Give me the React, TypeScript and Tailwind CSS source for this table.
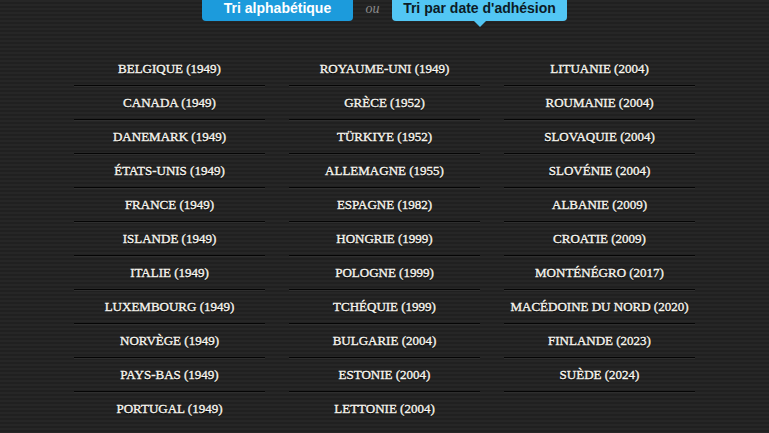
const col1 = [
  "BELGIQUE (1949)",
  "CANADA (1949)",
  "DANEMARK (1949)",
  "ÉTATS-UNIS (1949)",
  "FRANCE (1949)",
  "ISLANDE (1949)",
  "ITALIE (1949)",
  "LUXEMBOURG (1949)",
  "NORVÈGE (1949)",
  "PAYS-BAS (1949)",
  "PORTUGAL (1949)",
];

const col2 = [
  "ROYAUME-UNI (1949)",
  "GRÈCE (1952)",
  "TÜRKIYE (1952)",
  "ALLEMAGNE (1955)",
  "ESPAGNE (1982)",
  "HONGRIE (1999)",
  "POLOGNE (1999)",
  "TCHÉQUIE (1999)",
  "BULGARIE (2004)",
  "ESTONIE (2004)",
  "LETTONIE (2004)",
];

const col3 = [
  "LITUANIE (2004)",
  "ROUMANIE (2004)",
  "SLOVAQUIE (2004)",
  "SLOVÉNIE (2004)",
  "ALBANIE (2009)",
  "CROATIE (2009)",
  "MONTÉNÉGRO (2017)",
  "MACÉDOINE DU NORD (2020)",
  "FINLANDE (2023)",
  "SUÈDE (2024)",
];

function Column({ items, lastBorder }: { items: string[]; lastBorder: boolean }) {
  return (
    <ul className="flex flex-col">
      {items.map((name, i) => {
        const border = lastBorder || i < items.length - 1;
        return (
          <li
            key={name}
            className={`h-[34px] flex items-center justify-center text-[13px] text-[#f7f5ee] [-webkit-text-stroke:0.35px_#f7f5ee] [text-shadow:0_1px_1px_#000] ${
              border ? "border-b border-[#050505] shadow-[0_1px_0_#2e2e2e]" : ""
            }`}
          >
            {name}
          </li>
        );
      })}
    </ul>
  );
}

export default function App() {
  return (
    <div
      className="w-[769px] h-[433px] overflow-hidden bg-[repeating-linear-gradient(180deg,#262626_0px,#262626_2px,#202020_2px,#202020_4px)]"
      style={{ fontFamily: '"Liberation Serif", "Times New Roman", serif' }}
    >
      <div
        className="flex items-start justify-center -mt-[9px]"
        style={{ fontFamily: '"Liberation Sans", Arial, sans-serif' }}
      >
        <button className="w-[151px] h-[30px] rounded-[4px] bg-[#1c9bdc] text-white text-[14px] font-bold leading-none pt-[3px]">
          Tri alphabétique
        </button>
        <span className="w-[39px] h-[30px] flex items-center justify-center text-[#8a8a8a] italic text-[14px] pt-[4px] font-['Liberation_Serif',serif]">
          ou
        </span>
        <button className="relative w-[175px] h-[30px] rounded-[4px] bg-[#52c6f4] text-[#0c1b26] text-[14px] font-bold leading-none pt-[3px]">
          Tri par date d'adhésion
          <span className="absolute left-1/2 -translate-x-1/2 top-full w-0 h-0 border-l-[6px] border-r-[6px] border-t-[6px] border-l-transparent border-r-transparent border-t-[#52c6f4]" />
        </button>
      </div>

      <div className="w-[621px] mx-auto mt-[31px] grid grid-cols-3 gap-x-6">
        <Column items={col1} lastBorder={false} />
        <Column items={col2} lastBorder={false} />
        <Column items={col3} lastBorder={true} />
      </div>
    </div>
  );
}
